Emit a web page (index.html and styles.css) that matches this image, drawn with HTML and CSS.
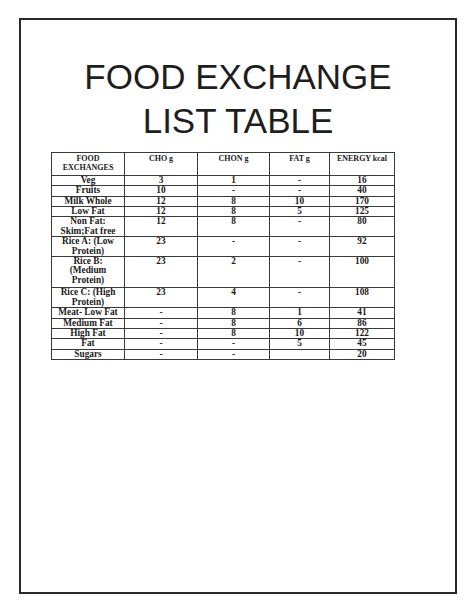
FILE: index.html
```html
<!DOCTYPE html>
<html>
<head>
<meta charset="utf-8">
<link rel="stylesheet" href="styles.css">
</head>
<body>
<div class="page">
  <h1 class="title">FOOD EXCHANGE<br>LIST TABLE</h1>
  <table class="fx">
    <colgroup>
      <col class="c1"><col class="c2"><col class="c3"><col class="c4"><col class="c5">
    </colgroup>
    <tr class="head"><td>FOOD<br>EXCHANGES</td><td>CHO g</td><td>CHON g</td><td>FAT g</td><td>ENERGY kcal</td></tr>
    <tr><td>Veg</td><td>3</td><td>1</td><td>-</td><td>16</td></tr>
    <tr><td>Fruits</td><td>10</td><td>-</td><td>-</td><td>40</td></tr>
    <tr><td>Milk Whole</td><td>12</td><td>8</td><td>10</td><td>170</td></tr>
    <tr><td>Low Fat</td><td>12</td><td>8</td><td>5</td><td>125</td></tr>
    <tr><td>Non Fat:<br>Skim;Fat free</td><td>12</td><td>8</td><td>-</td><td>80</td></tr>
    <tr><td>Rice A: (Low<br>Protein)</td><td>23</td><td>-</td><td>-</td><td>92</td></tr>
    <tr class="tall"><td>Rice B:<br>(Medium<br>Protein)</td><td>23</td><td>2</td><td>-</td><td>100</td></tr>
    <tr><td>Rice C: (High<br>Protein)</td><td>23</td><td>4</td><td>-</td><td>108</td></tr>
    <tr><td>Meat- Low Fat</td><td>-</td><td>8</td><td>1</td><td>41</td></tr>
    <tr><td>Medium Fat</td><td>-</td><td>8</td><td>6</td><td>86</td></tr>
    <tr><td>High Fat</td><td>-</td><td>8</td><td>10</td><td>122</td></tr>
    <tr><td>Fat</td><td>-</td><td>-</td><td>5</td><td>45</td></tr>
    <tr><td>Sugars</td><td>-</td><td>-</td><td></td><td>20</td></tr>
  </table>
</div>
</body>
</html>
```
FILE: styles.css
```css
html, body {
  margin: 0;
  padding: 0;
  background: #ffffff;
}
body {
  padding: 18px 0 0 19px;
}
.page {
  box-sizing: border-box;
  width: 438px;
  height: 576px;
  border: 2px solid #2a2a2a;
  padding-top: 35px;
  font-family: "Liberation Sans", Arial, sans-serif;
}
.title {
  margin: 0;
  font-weight: normal;
  font-size: 35px;
  line-height: 44px;
  text-align: center;
  color: #1e1e1e;
  letter-spacing: 0;
}
.fx {
  margin: 9px 0 0 30px;
  border-collapse: collapse;
  table-layout: fixed;
  width: 343px;
  font-family: "Liberation Serif", "Times New Roman", serif;
  font-weight: bold;
  font-size: 9.3px;
  color: #1a1a1a;
}
.c1 { width: 73px; }
.c2 { width: 73px; }
.c3 { width: 72px; }
.c4 { width: 60px; }
.c5 { width: 65px; }
.fx td {
  border: 1px solid #3a3a3a;
  padding: 0 1px;
  line-height: 9.4px;
  text-align: center;
  vertical-align: top;
}
.fx .head td {
  padding-top: 1px;
  padding-bottom: 2px;
  font-size: 8px;
}
.fx .tall td {
  padding-bottom: 2px;
}
```
